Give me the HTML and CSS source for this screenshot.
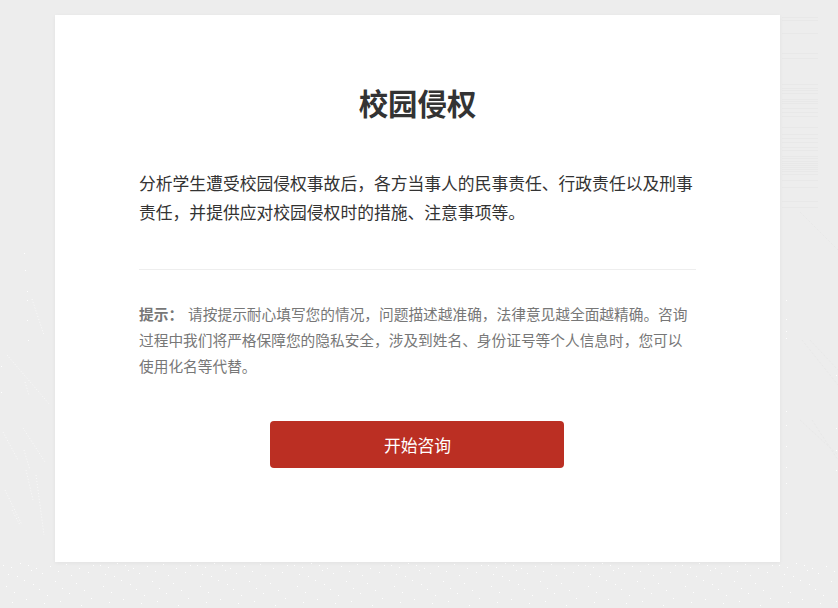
FILE: index.html
```html
<!DOCTYPE html>
<html lang="zh-CN">
<head>
    <meta charset="UTF-8">
    <meta name="viewport" content="width=device-width, initial-scale=1.0">
    <title>校园侵权</title>
    <link rel="stylesheet" href="styles.css">
</head>
<body>
    <div class="page">
        <!-- paper texture behind the card -->
        <svg class="texture" width="838" height="608" viewBox="0 0 838 608" aria-hidden="true">
            <defs>
                <pattern id="specks" width="97" height="46" patternUnits="userSpaceOnUse" y="562">
                    <path class="speck" d="M3 3h1M11 5h1M20 1h1M28 3h1M31 8h1M36 6h1M8 12h1M17 14h1M24 18h1M42 11h1M50 4h1M58 9h1M66 2h1M71 13h1M79 6h1M88 10h1M93 3h1M6 24h1M14 30h1M33 22h1M39 27h1M47 33h1M55 19h1M62 26h1M69 31h1M76 21h1M84 28h1M91 36h1M12 40h1M26 37h1M44 41h1M60 39h1M81 43h1"/>
                </pattern>
            </defs>
            <rect x="0" y="562" width="838" height="46" fill="url(#specks)"/>
            <path class="streak" d="M7 355L50 405M32 299L44 335M25 382L29 395M23 428L45 462M3 432L18 460M24 450L30 470M26 470L33 500M36 475L44 535M12 510L20 525M5 490L22 525"/>
            <path class="speck" d="M24 253h1M25 270h1M27 291h1M27 300h1M27 320h1M28 340h1M1 366h1M1 392h1M786 300h1M786 319h1M786 331h1M786 338h1M786 411h1M786 425h1M786 446h1M786 467h1M786 483h1M786 513h1M836 375h1M836 428h1M836 450h1M836 470h1"/>
            <path class="stroke-faint" d="M800 212L838 250M810 340L838 370M802 340L838 385M800 420L838 455M812 420L838 460"/>
            <path class="stripe" d="M782 17h36M782 20h36M782 33h36M782 53h36M782 58h36M782 84h36M782 88h36M782 90h36M782 93h36M782 99h36M782 101h36M782 103h36M782 108h36M782 112h36M782 116h36M782 127h36M782 134h36M782 138h36M782 142h36M782 147h36M782 150h36M782 156h36M782 158h36M782 161h36M782 163h36M782 165h36M782 167h36M782 169h36M782 171h36M782 174h36M782 180h36M782 187h36M782 201h36M782 207h36"/>
        </svg>
        <div class="card">
            <h1>校园侵权</h1>
            <p class="intro">分析学生遭受校园侵权事故后，各方当事人的民事责任、行政责任以及刑事责任，并提供应对校园侵权时的措施、注意事项等。</p>
            <div class="hint"><strong>提示：</strong><span>请按提示耐心填写您的情况，问题描述越准确，法律意见越全面越精确。咨询过程中我们将严格保障您的隐私安全，涉及到姓名、身份证号等个人信息时，您可以使用化名等代替。</span></div>
            <button class="btn-start">开始咨询</button>
        </div>
    </div>
</body>
</html>
```
FILE: styles.css
```css
* {
    margin: 0;
    padding: 0;
    box-sizing: border-box;
}
html, body {
    height: 100%;
    overflow: hidden;
}
body {
    font-family: "Liberation Sans", "Noto Sans CJK SC", sans-serif;
    font-size: 16.8px;
    color: #333;
    background-color: #ededed;
}
.page {
    position: relative;
    height: 100%;
    padding: 15px 58px 0 55px;
}
.texture {
    position: absolute;
    top: 0;
    left: 0;
}
.speck {
    fill: none;
    stroke: #fff;
    stroke-width: 1;
    shape-rendering: crispEdges;
}
.streak {
    fill: none;
    stroke: #fafafa;
    stroke-width: 1;
    stroke-dasharray: 1 2;
}
.stroke-faint {
    fill: none;
    stroke: #e8e8e8;
    stroke-width: 1;
    stroke-dasharray: 2 2;
}
.stripe {
    fill: none;
    stroke: #e8e8e8;
    stroke-width: 1;
    shape-rendering: crispEdges;
}
.card {
    position: relative;
    height: 547px;
    padding: 71px 84px 0;
    background: #fff;
    box-shadow: 0 1px 4px rgba(0, 0, 0, 0.05);
}
h1 {
    font-size: 29.4px;
    line-height: 38px;
    font-weight: bold;
    text-align: center;
    color: #333;
    margin-bottom: 46px;
}
.intro {
    line-height: 29px;
    color: #333;
    padding-bottom: 41px;
    border-bottom: 1px solid #eee;
}
.hint {
    margin-top: 32px;
    font-size: 14.7px;
    line-height: 26px;
    color: #777;
}
.hint strong {
    margin-right: 5px;
    color: #777;
}
.btn-start {
    display: block;
    width: 294px;
    height: 47px;
    margin: 41px 0 0 131px;
    padding-left: 1px;
    border: none;
    border-radius: 4px;
    background: #bb2f23;
    color: #fff;
    font-family: inherit;
    font-size: 16.8px;
    cursor: pointer;
}
```
